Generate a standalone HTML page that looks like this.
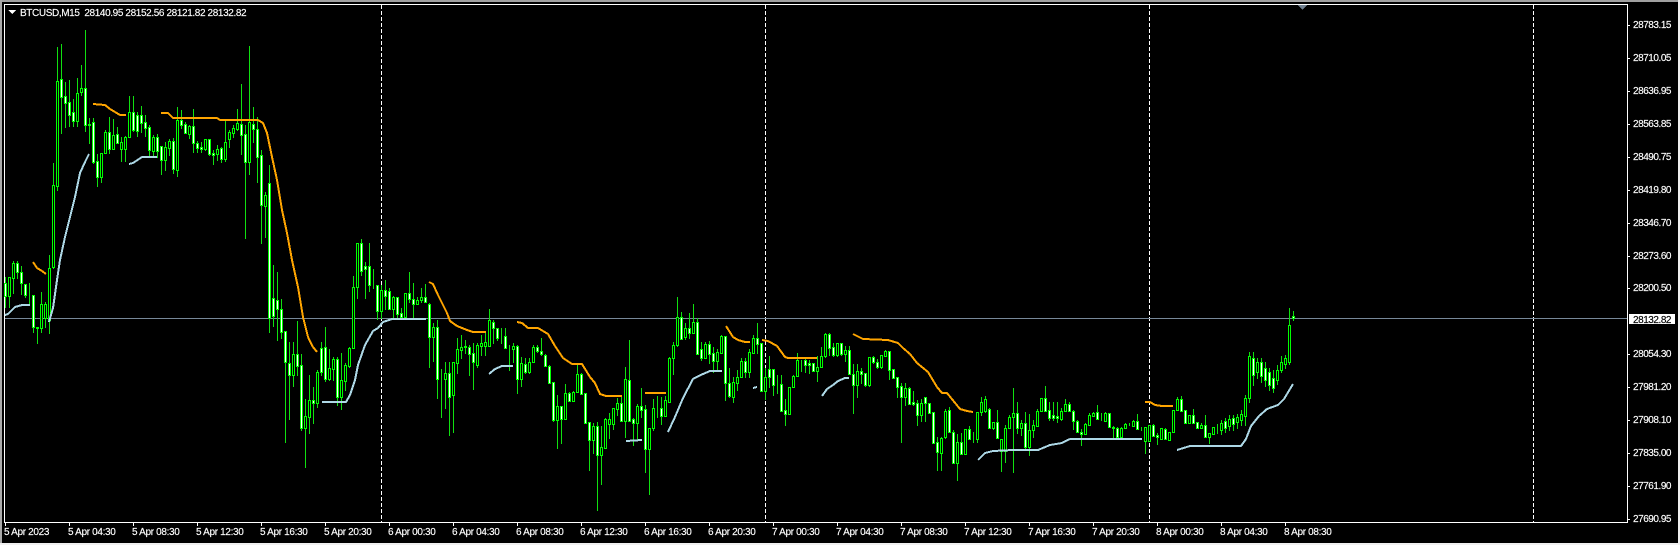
<!DOCTYPE html>
<html><head><meta charset="utf-8"><title>BTCUSD,M15</title>
<style>
html,body{margin:0;padding:0;background:#000;width:1680px;height:545px;overflow:hidden}
svg{position:absolute;left:0;top:0;display:block}
text{font-family:"Liberation Sans",sans-serif;font-size:10px;fill:#fff;stroke:#fff;stroke-width:.15px}
.p{letter-spacing:-.46px}
.t{letter-spacing:-.33px}
.h{letter-spacing:-.38px}
</style></head><body>
<svg id="s" width="1680" height="545" viewBox="0 0 1680 545" xmlns="http://www.w3.org/2000/svg">
<rect width="1680" height="545" fill="#000"/>
<g shape-rendering="crispEdges">
<rect x="0" y="0" width="1680" height="2" fill="#a0a0a0"/>
<rect x="0" y="0" width="2" height="545" fill="#a8a8a8"/>
<rect x="1678" y="0" width="2" height="545" fill="#f0f0f0"/>
<rect x="0" y="543" width="1680" height="2" fill="#f0f0f0"/>
<path d="M381.5 5V522M765.5 5V522M1149.5 5V522M1533.5 5V522" stroke="#fff" stroke-dasharray="4 2" fill="none"/>
<path d="M5 318.5H1627" stroke="#778899" fill="none"/>
<path d="M4.5 4V523M4 4.5H1628M1627.5 4V523M4 522.5H1628" stroke="#fff" fill="none"/>
<path d="M1627 25.5h3M1627 58.5h3M1627 91.5h3M1627 124.5h3M1627 157.5h3M1627 190.5h3M1627 223.5h3M1627 256.5h3M1627 288.5h3M1627 354.5h3M1627 387.5h3M1627 420.5h3M1627 453.5h3M1627 486.5h3M1627 519.5h3" stroke="#fff"/>
<path d="M5.5 522v4M69.5 522v4M133.5 522v4M197.5 522v4M261.5 522v4M325.5 522v4M389.5 522v4M453.5 522v4M517.5 522v4M581.5 522v4M645.5 522v4M709.5 522v4M773.5 522v4M837.5 522v4M901.5 522v4M965.5 522v4M1029.5 522v4M1093.5 522v4M1157.5 522v4M1221.5 522v4M1285.5 522v4" stroke="#fff"/>
<polygon points="1298,5 1307,5 1302.5,10" fill="#708090"/>
<polygon points="8,10 16,10 12,14" fill="#fff"/>
</g>
<g id="c" shape-rendering="crispEdges"></g>
<g fill="none" stroke-width="2" shape-rendering="crispEdges">
<g stroke="#ADD8E6">
<path d="M5 315 8 314 12 310 15 307 22 305 30 305"/>
<path d="M49 322 53 308 57 280 60 260 65 237 70 217 75 197 80 173 85 162 89 154"/>
<path d="M129 164 133 163 142 157 147 157 157 157"/>
<path d="M322 402 346 402 350 395 355 380 358 365 365 345 373 331 378 328 383 322 392 319 426 319"/>
<path d="M489 374 495 369 502 366 513 366"/>
<path d="M626 441 642 440"/>
<path d="M668 432 675 417 683 398 693 379 703 374 710 371 722 371"/>
<path d="M753 388 757 387"/>
<path d="M822 396 827 389 833 385 838 381 845 378 849 378"/>
<path d="M978 460 985 453 993 451 1013 450 1038 450 1050 445 1062 443 1070 439 1142 439"/>
<path d="M1177 450 1190 446 1241 446 1246 439 1251 426 1259 416 1267 409 1278 405 1284 399 1293 384"/>
</g>
<g stroke="#FFA500">
<path d="M33 262 37 268 42 271 46 274"/>
<path d="M93 104 105 105 110 109 120 115 126 115"/>
<path d="M161 113 168 113 173 118 217 118 220 120 258 120 263 123 267 133 272 157 277 180 282 210 287 233 292 260 298 287 303 317 308 337 313 347 317 352"/>
<path d="M429 282 433 284 438 295 447 313 450 321 457 326 467 330 473 332 486 332"/>
<path d="M517 322 522 323 528 328 538 328 548 334 555 346 563 358 572 364 582 364 590 377 595 383 600 394 606 396 622 396"/>
<path d="M645 393 666 393"/>
<path d="M726 326 733 337 738 340 745 342 750 342"/>
<path d="M762 340 768 341 777 346 785 357 788 358 817 358"/>
<path d="M853 334 863 339 888 340 898 343 903 348 910 354 917 363 928 372 937 387 942 393 947 393 960 409 967 411 973 412"/>
<path d="M1145 402 1150 402 1155 405 1162 406 1173 406"/>
</g>
</g>
<text x="20" y="16" class="h" xml:space="preserve">BTCUSD,M15  28140.95 28152.56 28121.82 28132.82</text>
<g class="p">
<text x="1633" y="28">28783.15</text>
<text x="1633" y="61">28710.05</text>
<text x="1633" y="94">28636.95</text>
<text x="1633" y="127">28563.85</text>
<text x="1633" y="160">28490.75</text>
<text x="1633" y="193">28419.80</text>
<text x="1633" y="226">28346.70</text>
<text x="1633" y="259">28273.60</text>
<text x="1633" y="291">28200.50</text>
<text x="1633" y="357">28054.30</text>
<text x="1633" y="390">27981.20</text>
<text x="1633" y="423">27908.10</text>
<text x="1633" y="456">27835.00</text>
<text x="1633" y="489">27761.90</text>
<text x="1633" y="522">27690.95</text>
</g>
<rect x="1629" y="314" width="46" height="10" fill="#fff" shape-rendering="crispEdges"/>
<text x="1633" y="323" class="p" style="fill:#000;stroke:#000">28132.82</text>
<g class="t">
<text x="4" y="535">5 Apr 2023</text>
<text x="68" y="535">5 Apr 04:30</text>
<text x="132" y="535">5 Apr 08:30</text>
<text x="196" y="535">5 Apr 12:30</text>
<text x="260" y="535">5 Apr 16:30</text>
<text x="324" y="535">5 Apr 20:30</text>
<text x="388" y="535">6 Apr 00:30</text>
<text x="452" y="535">6 Apr 04:30</text>
<text x="516" y="535">6 Apr 08:30</text>
<text x="580" y="535">6 Apr 12:30</text>
<text x="644" y="535">6 Apr 16:30</text>
<text x="708" y="535">6 Apr 20:30</text>
<text x="772" y="535">7 Apr 00:30</text>
<text x="836" y="535">7 Apr 04:30</text>
<text x="900" y="535">7 Apr 08:30</text>
<text x="964" y="535">7 Apr 12:30</text>
<text x="1028" y="535">7 Apr 16:30</text>
<text x="1092" y="535">7 Apr 20:30</text>
<text x="1156" y="535">8 Apr 00:30</text>
<text x="1220" y="535">8 Apr 04:30</text>
<text x="1284" y="535">8 Apr 08:30</text>
</g>
</svg>
<script>
var d="277 283 296 307 1;277 277 296 307 0;261 263 278 293 0;261 263 272 278 1;266 272 283 294 1;284 284 295 297 1;283 295 295 305 0;295 295 327 332 1;327 327 328 343 1;292 304 328 332 0;302 304 318 327 0;255 268 320 333 0;163 185 267 268 0;47 81 186 190 0;44 79 97 133 1;82 96 103 127 1;80 102 115 126 1;99 112 121 126 1;78 93 121 126 0;65 88 92 95 0;30 88 125 131 1;118 124 125 143 1;118 122 162 163 1;154 161 177 186 1;153 153 177 182 0;130 132 153 153 0;117 132 149 153 1;119 135 149 149 0;127 134 143 143 1;137 142 149 161 0;136 137 149 161 0;96 112 137 137 0;96 112 130 131 1;112 115 131 136 1;106 115 123 132 1;115 122 128 136 1;125 127 150 157 1;135 137 151 157 0;134 137 151 157 1;146 146 160 174 1;142 147 160 170 0;139 141 148 155 0;138 141 169 173 1;107 120 170 176 0;110 120 125 128 1;122 124 133 133 1;125 126 134 138 0;109 126 143 152 1;141 143 148 152 1;142 147 149 152 1;139 139 149 150 0;139 139 154 155 1;150 153 155 164 1;145 149 154 160 0;147 148 159 162 1;121 142 159 161 0;130 132 139 147 0;125 128 133 137 0;109 123 129 130 0;84 124 135 154 1;125 134 162 238 1;46 122 162 174 0;107 124 129 142 1;117 129 157 182 1;150 155 205 243 1;192 195 206 237 0;165 183 318 332 1;265 298 316 326 1;272 300 309 340 1;299 309 332 338 1;331 331 362 442 1;342 363 375 419 1;342 354 375 386 0;321 354 366 375 1;354 365 428 430 1;399 416 428 467 0;375 400 417 433 0;387 400 403 423 1;370 372 403 407 0;342 348 372 375 1;327 347 379 381 1;349 368 379 380 0;357 359 369 380 0;357 359 397 405 1;353 380 397 409 0;363 365 381 390 0;347 348 366 367 0;276 287 348 348 0;243 243 287 298 0;239 243 271 275 1;262 266 269 298 1;243 266 285 291 1;269 285 285 288 1;285 285 311 319 1;285 290 311 318 0;280 290 296 309 1;288 291 309 309 1;296 297 309 318 0;297 297 314 317 1;308 313 317 318 1;293 293 317 317 0;272 293 299 302 1;283 299 304 317 1;297 300 304 304 0;288 297 300 302 0;284 297 302 302 1;303 304 337 367 1;323 327 337 361 0;320 327 379 398 1;369 379 379 417 1;362 373 379 408 0;362 373 397 435 1;362 362 395 432 0;338 349 363 373 0;335 347 350 358 0;340 346 347 353 1;345 347 354 375 1;343 353 362 389 1;343 345 365 367 0;335 343 346 355 0;332 342 346 355 0;309 320 346 346 0;320 322 328 343 1;328 328 338 340 1;328 337 337 343 1;328 336 348 348 1;345 348 348 370 1;343 346 349 362 0;345 346 379 393 1;357 363 379 386 0;358 364 372 373 1;358 362 372 373 0;345 347 362 362 0;345 347 351 352 1;338 351 354 355 1;354 355 366 366 1;365 366 383 383 1;382 382 420 421 1;395 406 420 448 0;406 406 419 443 1;384 393 419 419 0;392 393 401 401 1;391 392 401 401 0;365 374 392 392 0;373 374 394 394 1;393 393 423 423 1;422 422 440 470 1;423 426 440 453 0;422 426 455 510 1;426 447 455 484 0;418 419 448 448 0;413 419 424 438 0;408 408 424 429 0;398 403 409 415 0;396 403 421 421 1;367 379 421 437 0;340 380 421 421 1;418 419 423 445 1;404 406 423 440 0;388 406 410 417 1;405 409 449 472 1;428 428 449 494 0;399 408 428 430 0;396 408 408 417 1;397 408 416 424 1;396 400 416 416 0;357 358 402 402 0;342 345 358 374 0;297 317 345 346 0;312 317 339 339 1;323 328 337 339 0;313 328 333 338 1;304 322 333 333 0;318 322 354 354 1;342 349 358 360 1;342 344 358 358 0;341 344 354 363 1;347 353 361 372 1;349 352 361 370 0;335 336 353 353 0;336 336 383 400 1;368 383 396 397 1;377 382 397 402 0;370 377 383 390 0;358 361 377 377 0;358 361 372 377 1;349 352 372 377 0;335 338 353 353 0;323 338 344 353 1;343 343 391 391 1;368 377 391 399 0;356 369 377 387 1;369 369 385 395 1;375 385 385 393 1;375 384 411 411 1;399 410 414 425 1;387 387 414 414 0;375 376 387 387 0;353 360 376 376 0;360 360 360 371 1;358 360 365 372 1;360 363 365 373 1;363 363 371 371 1;356 367 371 381 0;347 356 367 367 0;333 334 356 357 0;333 334 348 355 1;343 347 355 356 1;343 343 355 356 0;343 343 354 355 1;346 350 354 361 0;346 350 374 374 1;364 374 385 413 1;364 371 385 397 0;368 371 374 383 1;373 373 385 386 1;357 357 385 386 0;356 357 362 363 1;359 362 367 368 1;355 355 367 368 0;350 351 356 356 0;351 351 370 379 1;369 369 378 378 1;377 377 387 397 1;383 386 397 442 1;383 388 397 405 0;387 388 404 404 1;391 402 404 405 1;400 403 415 425 1;399 403 415 421 0;397 397 403 421 1;403 403 413 413 1;412 412 443 443 1;437 442 452 470 1;437 438 453 470 0;409 411 437 438 0;407 410 432 432 1;430 432 463 463 1;434 442 463 480 0;433 442 454 454 1;429 429 454 454 0;426 429 439 439 1;432 438 438 442 1;412 412 439 442 0;397 402 412 415 0;396 399 411 412 0;408 409 428 428 1;422 422 428 429 0;410 422 438 438 1;439 439 451 471 0;425 428 451 462 0;415 417 428 428 0;388 413 417 472 0;402 413 428 433 1;420 423 428 435 0;412 423 447 448 1;414 430 447 455 0;420 425 430 437 0;409 411 426 426 0;398 398 411 411 0;386 398 411 411 1;402 410 418 420 1;402 415 418 420 1;402 416 418 422 1;408 411 419 420 0;399 404 411 411 0;402 404 411 411 1;410 411 421 429 1;420 421 432 432 1;429 432 434 445 1;423 424 434 434 0;413 415 425 425 0;412 413 416 416 0;405 412 419 419 1;413 419 419 420 1;412 413 421 421 0;413 413 427 427 1;426 427 428 437 1;427 428 437 437 1;427 428 437 437 0;423 424 428 428 0;423 424 424 425 0;420 421 426 426 0;414 421 429 429 1;427 427 427 430 1;427 427 441 453 0;425 425 441 441 0;424 425 436 436 1;433 435 437 444 1;428 428 439 439 0;428 429 439 439 1;432 432 440 440 0;410 410 432 432 0;397 399 410 410 0;396 399 411 411 1;410 410 423 423 1;415 415 423 423 0;409 415 423 423 1;422 422 428 428 1;423 425 428 428 0;415 425 437 437 1;433 433 437 443 0;427 427 434 434 0;424 426 426 433 0;420 423 430 434 0;418 421 428 432 1;415 419 426 430 0;415 418 424 430 1;414 417 422 428 0;410 414 420 425 0;395 398 416 425 0;352 356 398 402 0;352 358 375 385 1;358 362 372 378 0;358 362 376 382 1;362 368 380 386 1;368 372 385 390 1;370 378 388 392 1;365 370 380 384 0;356 362 370 372 0;355 358 364 368 0;308 325 362 364 0;311 316 318 320 1".split(";");
var w="",b="";
for(var i=0;i<d.length;i++){var a=d[i].split(" ").map(Number),x=5+4*i;
var hi=Math.min(a[0],a[1]),lo=Math.max(a[3],a[2]);
w+="M"+(x+.5)+" "+hi+"V"+(lo+1);
var t=a[1],o=a[2];
b+='<rect x="'+(x-.5)+'" y="'+(t+.5)+'" width="2" height="'+Math.max(o-t,0)+'" fill="'+(a[4]?"#fff":"#000")+'" stroke="#00ff00"/>';}
document.getElementById("c").innerHTML='<path d="'+w+'" stroke="#10e010" fill="none"/>'+b;
</script>
</body></html>
